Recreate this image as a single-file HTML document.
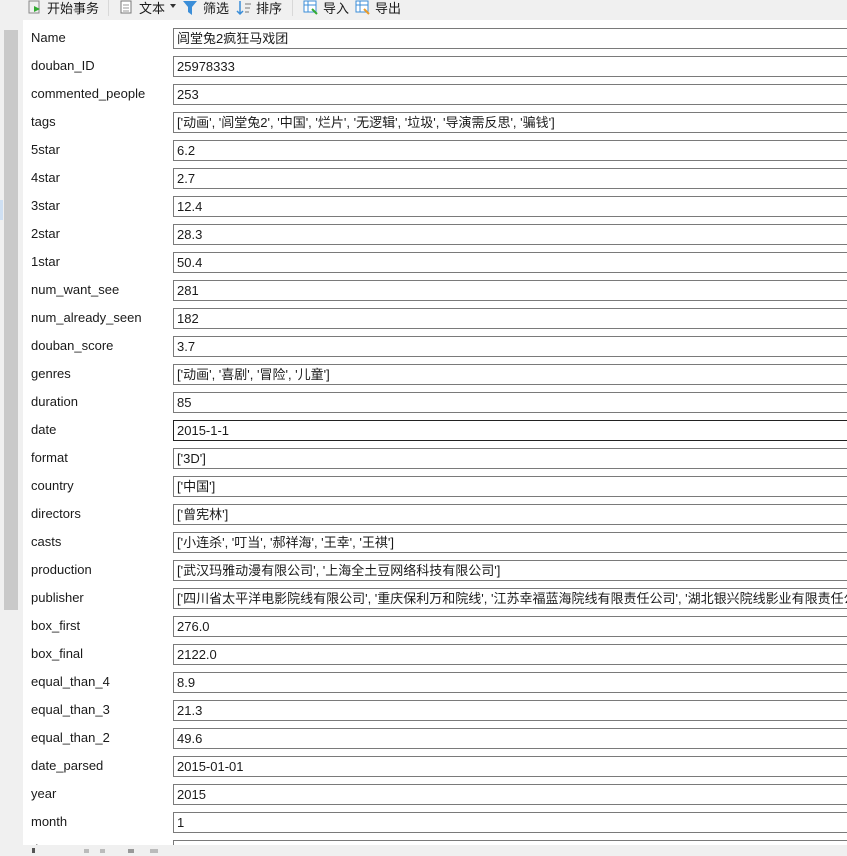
<!DOCTYPE html>
<html><head><meta charset="utf-8"><style>
*{margin:0;padding:0;box-sizing:border-box}
body{width:847px;height:853px;overflow:hidden;background:#f0f0f0;font-family:"Liberation Sans","Noto Sans CJK SC",sans-serif;font-size:13px;color:#1a1a1a;position:relative}
.tb{position:absolute;top:0;left:0;height:20px;width:847px}
.tb span{position:absolute;top:-2px;font-size:13px;font-family:"Noto Sans CJK SC","Liberation Sans",sans-serif}
.tb svg{position:absolute}
.sep{position:absolute;top:0;width:1px;height:16px;background:#d8d8d8}
.strip{position:absolute;left:4px;top:30px;width:14px;height:580px;background:#c9c9c9}
.hl{position:absolute;left:0;top:200px;width:3px;height:20px;background:#cfe0f3}
.panel{position:absolute;left:23px;top:20px;width:824px;height:825px;background:#fff;overflow:hidden}
.row{position:absolute;left:0;height:28px;width:824px}
.lab{position:absolute;left:8px;top:10px;font-size:13px}
.inp{position:absolute;left:150px;top:8px;width:700px;height:21px;border:1px solid #7a7a7a;padding-left:3px;line-height:19px;font-size:13px;white-space:nowrap;overflow:hidden;font-family:"Liberation Sans","Noto Sans CJK SC",sans-serif}
.inp.f{border-color:#222}
.bot{position:absolute;top:845px;left:0;width:847px;height:8px;background:#f0f0f0}
</style></head><body>
<div class="tb">
<svg style="left:28px;top:0" width="14" height="14"><rect x="1" y="1" width="10" height="12" fill="none" stroke="#888"/><path d="M6 6 L12 9 L6 12Z" fill="#3a3"/></svg>
<span style="left:47px">开始事务</span>
<div class="sep" style="left:108px"></div>
<svg style="left:120px;top:0" width="13" height="14"><rect x="1" y="1" width="10" height="12" fill="#fff" stroke="#777"/><path d="M3 5h6M3 8h6M3 11h6" stroke="#999"/></svg>
<span style="left:139px">文本</span>
<svg style="left:170px;top:4px" width="6" height="4"><path d="M0 0h6L3 4Z" fill="#333"/></svg>
<svg style="left:182px;top:0" width="16" height="16"><path d="M1 1h14L10 7v8L6 12V7Z" fill="#3b8ed8"/></svg>
<span style="left:203px">筛选</span>
<svg style="left:236px;top:0" width="16" height="16"><path d="M4 1v13M1 11l3 3 3-3" stroke="#3b8ed8" fill="none" stroke-width="1.5"/><path d="M9 4h6M9 8h5M9 12h4" stroke="#777"/></svg>
<span style="left:256px">排序</span>
<div class="sep" style="left:292px"></div>
<svg style="left:303px;top:0" width="16" height="16"><rect x="1" y="1" width="12" height="11" fill="#fff" stroke="#3b8ed8"/><path d="M1 5h12M5 1v11" stroke="#3b8ed8"/><path d="M9 9l5 5" stroke="#3a3" stroke-width="2"/></svg>
<span style="left:323px">导入</span>
<svg style="left:355px;top:0" width="16" height="16"><rect x="1" y="1" width="12" height="11" fill="#fff" stroke="#3b8ed8"/><path d="M1 5h12M5 1v11" stroke="#3b8ed8"/><path d="M9 9l5 5" stroke="#e89a2a" stroke-width="2"/></svg>
<span style="left:375px">导出</span>
</div>
<div class="strip"></div><div class="hl"></div>
<div class="panel">
<div class="row" style="top:0"><div class="lab">Name</div><div class="inp">闾堂兔2疯狂马戏团</div></div>
<div class="row" style="top:28px"><div class="lab">douban_ID</div><div class="inp">25978333</div></div>
<div class="row" style="top:56px"><div class="lab">commented_people</div><div class="inp">253</div></div>
<div class="row" style="top:84px"><div class="lab">tags</div><div class="inp">['动画', '闾堂兔2', '中国', '烂片', '无逻辑', '垃圾', '导演需反思', '骗钱']</div></div>
<div class="row" style="top:112px"><div class="lab">5star</div><div class="inp">6.2</div></div>
<div class="row" style="top:140px"><div class="lab">4star</div><div class="inp">2.7</div></div>
<div class="row" style="top:168px"><div class="lab">3star</div><div class="inp">12.4</div></div>
<div class="row" style="top:196px"><div class="lab">2star</div><div class="inp">28.3</div></div>
<div class="row" style="top:224px"><div class="lab">1star</div><div class="inp">50.4</div></div>
<div class="row" style="top:252px"><div class="lab">num_want_see</div><div class="inp">281</div></div>
<div class="row" style="top:280px"><div class="lab">num_already_seen</div><div class="inp">182</div></div>
<div class="row" style="top:308px"><div class="lab">douban_score</div><div class="inp">3.7</div></div>
<div class="row" style="top:336px"><div class="lab">genres</div><div class="inp">['动画', '喜剧', '冒险', '儿童']</div></div>
<div class="row" style="top:364px"><div class="lab">duration</div><div class="inp">85</div></div>
<div class="row" style="top:392px"><div class="lab">date</div><div class="inp f">2015-1-1</div></div>
<div class="row" style="top:420px"><div class="lab">format</div><div class="inp">['3D']</div></div>
<div class="row" style="top:448px"><div class="lab">country</div><div class="inp">['中国']</div></div>
<div class="row" style="top:476px"><div class="lab">directors</div><div class="inp">['曾宪林']</div></div>
<div class="row" style="top:504px"><div class="lab">casts</div><div class="inp">['小连杀', '叮当', '郝祥海', '王幸', '王祺']</div></div>
<div class="row" style="top:532px"><div class="lab">production</div><div class="inp">['武汉玛雅动漫有限公司', '上海全土豆网络科技有限公司']</div></div>
<div class="row" style="top:560px"><div class="lab">publisher</div><div class="inp">['四川省太平洋电影院线有限公司', '重庆保利万和院线', '江苏幸福蓝海院线有限责任公司', '湖北银兴院线影业有限责任公司', '浙</div></div>
<div class="row" style="top:588px"><div class="lab">box_first</div><div class="inp">276.0</div></div>
<div class="row" style="top:616px"><div class="lab">box_final</div><div class="inp">2122.0</div></div>
<div class="row" style="top:644px"><div class="lab">equal_than_4</div><div class="inp">8.9</div></div>
<div class="row" style="top:672px"><div class="lab">equal_than_3</div><div class="inp">21.3</div></div>
<div class="row" style="top:700px"><div class="lab">equal_than_2</div><div class="inp">49.6</div></div>
<div class="row" style="top:728px"><div class="lab">date_parsed</div><div class="inp">2015-01-01</div></div>
<div class="row" style="top:756px"><div class="lab">year</div><div class="inp">2015</div></div>
<div class="row" style="top:784px"><div class="lab">month</div><div class="inp">1</div></div>
<div class="row" style="top:812px"><div class="lab">day</div><div class="inp"></div></div>
</div>
<div class="bot"><svg width="200" height="8" style="position:absolute;left:28px;top:3px"><rect x="4" y="0" width="3" height="5" fill="#555"/><rect x="56" y="1" width="5" height="4" fill="#bbb"/><rect x="72" y="1" width="5" height="4" fill="#bbb"/><rect x="100" y="1" width="6" height="4" fill="#999"/><rect x="122" y="1" width="8" height="4" fill="#bbb"/></svg></div>
</body></html>
